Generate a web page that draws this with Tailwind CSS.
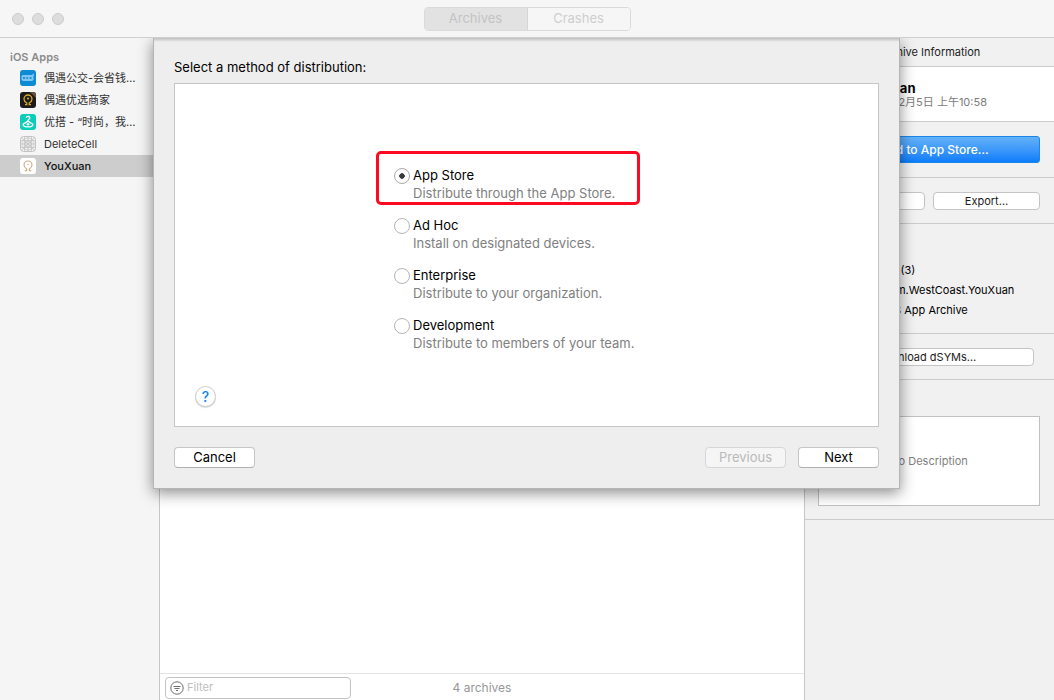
<!DOCTYPE html>
<html lang="en">
<head>
<meta charset="utf-8">
<title>Archives</title>
<script src="https://cdn.jsdelivr.net/npm/@tailwindcss/browser@4"></script>
</head>
<body class="h-screen flex flex-col overflow-hidden bg-white text-[#1c1c1c] text-[11px] font-['Inter','Noto_Sans_CJK_SC',sans-serif]">
<header class="h-[38px] shrink-0 flex items-center bg-[#f6f6f6] border-b border-[#cfcfcf]">
  <div class="flex-1 flex gap-2 pl-3">
    <span class="size-3 rounded-full bg-[#dddddd] border border-[#cccccc]"></span>
    <span class="size-3 rounded-full bg-[#dddddd] border border-[#cccccc]"></span>
    <span class="size-3 rounded-full bg-[#dddddd] border border-[#cccccc]"></span>
  </div>
  <div class="flex w-[207px] h-6 rounded border border-[#dadada] overflow-hidden text-[13px] text-[#c3c3c3]">
    <button class="w-[103px] bg-[#e2e2e2] border-r border-[#d6d6d6]">Archives</button>
    <button class="flex-1 text-[#cecece] bg-[#f6f6f6]">Crashes</button>
  </div>
  <div class="flex-1 pr-3"></div>
</header>

<div class="relative flex-1 flex min-h-0 overflow-hidden">
  <nav class="w-40 shrink-0 bg-[#f5f5f5] border-r border-[#c6c6c6] pt-2.5">
    <h2 class="pl-2.5 h-[19px] leading-[19px] font-semibold text-[#8b8b8b]">iOS Apps</h2>
    <ul class="text-[#303030]">
      <li><a href="#" class="flex items-center gap-2 h-[22px] pl-5">
        <svg class="size-4 shrink-0" viewBox="0 0 16 16"><rect width="16" height="16" rx="3" fill="#0c8ad3"/><path d="M1.500 6l1-1h9l2.500-1.500V5l-.5 1v4l-1.500 1H3l-1.500-1z" fill="#7cc8f3"/><path d="M3 7h2v2H3zM6.300 7H8v2H6.300zM9.500 7h2v2h-2z" fill="#2a8ecb"/></svg>
        <span>偶遇公交-会省钱…</span></a></li>
      <li><a href="#" class="flex items-center gap-2 h-[22px] pl-5">
        <svg class="size-4 shrink-0" viewBox="0 0 16 16"><rect width="16" height="16" rx="3" fill="#1c1a1a"/><path d="M10 0h3a3 3 0 0 1 3 3v3z" fill="#6a5038"/><g fill="none" stroke="#d9a52c" stroke-width="1.300"><path d="M5 12.700h1.800V11C5 10 4 8.800 4 7a4 4 0 0 1 8 0c0 1.800-1 3-2.800 4v1.700H11"/></g><circle cx="8" cy="6.500" r="1.100" fill="#d9a52c"/></svg>
        <span>偶遇优选商家</span></a></li>
      <li><a href="#" class="flex items-center gap-2 h-[22px] pl-5">
        <svg class="size-4 shrink-0" viewBox="0 0 16 16"><rect width="16" height="16" rx="3" fill="#0bcdbb"/><g fill="none" stroke="#fff" stroke-width="1.400"><path d="M6.300 4a1.700 1.700 0 1 1 2.500 1.500Q8 6 8 7"/><path d="M8 7.200L3.500 10q-1 1.500 1 2.300 3.500 1.200 7 0 2-.8 1-2.300z"/></g><circle cx="8" cy="10.300" r="1.300" fill="#fff"/></svg>
        <span>优搭 - “时尚，我…</span></a></li>
      <li><a href="#" class="flex items-center gap-2 h-[22px] pl-5">
        <svg class="size-4 shrink-0" viewBox="0 0 16 16"><rect x=".5" y=".5" width="15" height="15" rx="3" fill="#efefef" stroke="#c4c4c4"/><g fill="none" stroke="#c2c2c2" stroke-width=".7"><path d="M4.500 0v16M8 0v16M11.500 0v16M0 4.500h16M0 8h16M0 11.500h16M1 1l14 14M15 1L1 15"/><circle cx="8" cy="8" r="6"/><circle cx="8" cy="8" r="3"/></g></svg>
        <span>DeleteCell</span></a></li>
      <li><a href="#" class="flex items-center gap-2 h-[22px] pl-5 bg-[#cdcdcd] text-[#111111] font-medium">
        <svg class="size-4 shrink-0" viewBox="0 0 16 16"><rect width="16" height="16" rx="3" fill="#fff"/><path d="M4.700 12.800h2V11C5 10 4 8.800 4 7a4 4 0 0 1 8 0c0 1.800-1 3-2.700 4v1.800h2" fill="none" stroke="#cfab80" stroke-width="1.100"/><circle cx="8" cy="6.500" r=".8" fill="#dcc09c"/></svg>
        <span>YouXuan</span></a></li>
    </ul>
  </nav>

  <main class="flex-1 flex flex-col justify-end bg-white">
    <footer class="relative h-[27px] border-t border-[#e4e4e4] flex items-center pl-[5px] pt-px">
      <label class="flex items-center gap-[3px] w-[186px] h-[22px] pl-1 rounded border border-[#c3c3c3]">
        <svg class="size-[14px] shrink-0" viewBox="0 0 14 14" fill="none" stroke="#6d6d6d"><circle cx="7" cy="7" r="6.200"/><path d="M3.500 5.500h7M4.500 7.500h5M6 9.500h2"/></svg>
        <input type="text" aria-label="Filter" placeholder="Filter" class="min-w-0 flex-1 outline-none placeholder:text-[#bdbdbd]">
      </label>
      <span class="absolute inset-x-0 text-center text-[12px] text-[#979797] pointer-events-none">4 archives</span>
    </footer>
  </main>

  <aside class="w-[250px] shrink-0 bg-[#f1f1f1] border-l border-[#c6c6c6]">
    <h2 class="h-[29px] leading-7 text-center border-b border-[#cbcbcb]">Archive Information</h2>
    <div class="h-[55px] pl-[53px] pt-3.5 bg-white border-b border-[#cbcbcb]">
      <h3 class="text-[13px] leading-[14px] font-bold text-black">YouXuan</h3>
      <p class="leading-[14px] text-[#7c7c7c]">2018年12月5日 上午10:58</p>
    </div>
    <div class="h-14 px-3.5 pt-3.5 border-b border-[#cbcbcb]">
      <button class="w-full h-[27px] pr-2 rounded-[3px] border border-[#1c85ea] bg-linear-to-b from-[#62b1f8] to-[#077dfb] text-white text-[12px] font-medium">Upload to App Store…</button>
    </div>
    <div class="h-[46px] px-3.5 pt-3.5 flex gap-2 border-b border-[#cbcbcb]">
      <button class="flex-1 h-[18px] rounded bg-white border border-[#c4c4c4]">Validate…</button>
      <button class="w-[107px] h-[18px] rounded bg-white border border-[#c4c4c4]">Export…</button>
    </div>
    <div class="h-[110px] px-3.5 pt-4 border-b border-[#cbcbcb] text-black">
      <h3 class="h-5 font-semibold">Details</h3>
      <dl class="grid grid-cols-[56px_1fr] gap-x-2 leading-5">
        <dt class="text-right">Version</dt><dd>1.0 (3)</dd>
        <dt class="text-right">Identifier</dt><dd>com.WestCoast.YouXuan</dd>
        <dt class="text-right">Type</dt><dd>iOS App Archive</dd>
      </dl>
    </div>
    <div class="h-[46px] px-5 pt-3.5 border-b border-[#cbcbcb]">
      <button class="w-full h-[18px] pr-2 rounded bg-white border border-[#c4c4c4]">Download dSYMs…</button>
    </div>
    <div class="h-[140px] pl-[13px] pr-3.5 pt-4 border-b border-[#cbcbcb]">
      <h3 class="h-5 font-semibold">Description</h3>
      <textarea aria-label="Description" placeholder="No Description" class="block w-full h-[90px] resize-none bg-white border border-[#c1c1c1] text-center pt-9 placeholder:text-[#7f7f7f]"></textarea>
    </div>
  </aside>

  <section role="dialog" aria-labelledby="sheet-title" class="absolute top-0 left-[153px] right-[154px] bg-[#eeeeee] border-x border-b border-[#b5b5b5] px-5 pt-[19px] pb-5 shadow-[0_4px_14px_rgba(0,0,0,0.45)] text-[13px] text-black">
    <div class="absolute top-0 inset-x-0 h-1 bg-linear-to-b from-black/20 to-transparent"></div>
    <h1 id="sheet-title" class="h-[26px] leading-5">Select a method of distribution:</h1>
    <div class="relative h-[344px] bg-white border border-[#c6c6c6] pl-[219px] pt-[82px]">
      <fieldset class="relative flex flex-col gap-3.5 leading-[18px]">
        <label class="flex gap-[3px]"><input type="radio" name="method" checked class="appearance-none mt-0.5 size-4 shrink-0 rounded-full border border-[#a9a9a9] bg-white bg-[radial-gradient(circle,#3a3a3a_0_2.5px,transparent_3px)]"><span>App Store<span class="block text-[#808080]">Distribute through the App Store.</span></span></label>
        <label class="flex gap-[3px]"><input type="radio" name="method" class="appearance-none mt-0.5 size-4 shrink-0 rounded-full border border-[#b4b4b4] bg-white"><span>Ad Hoc<span class="block text-[#808080]">Install on designated devices.</span></span></label>
        <label class="flex gap-[3px]"><input type="radio" name="method" class="appearance-none mt-0.5 size-4 shrink-0 rounded-full border border-[#b4b4b4] bg-white"><span>Enterprise<span class="block text-[#808080]">Distribute to your organization.</span></span></label>
        <label class="flex gap-[3px]"><input type="radio" name="method" class="appearance-none mt-0.5 size-4 shrink-0 rounded-full border border-[#b4b4b4] bg-white"><span>Development<span class="block text-[#808080]">Distribute to members of your team.</span></span></label>
        <div class="absolute -left-[18px] -top-[15px] w-[264px] h-[54px] border-3 border-[#fb0a22] rounded-[5px] pointer-events-none"></div>
      </fieldset>
      <button aria-label="Help" class="absolute left-5 bottom-[19px] size-[21px] rounded-full bg-white border border-[#cccccc] shadow-[0_1px_1px_rgba(0,0,0,0.15)] text-[14px] leading-[19px] font-medium text-[#0f83fa]">?</button>
    </div>
    <div class="flex gap-3 pt-5">
      <button class="w-[81px] h-[21px] rounded bg-white border border-[#c6c6c6] border-b-[#b0b0b0]">Cancel</button>
      <button disabled class="ml-auto w-[81px] h-[21px] rounded bg-[#f5f5f5] border border-[#d6d6d6] text-[#b9b9b9]">Previous</button>
      <button class="w-[81px] h-[21px] rounded bg-white border border-[#c6c6c6] border-b-[#b0b0b0]">Next</button>
    </div>
  </section>
</div>
</body>
</html>
